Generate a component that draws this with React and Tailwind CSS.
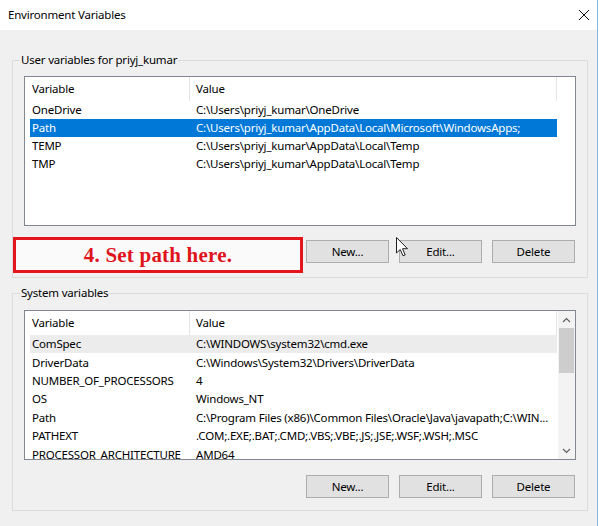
import React from "react";

const userRows = [
  ["OneDrive", "C:\\Users\\priyj_kumar\\OneDrive"],
  ["Path", "C:\\Users\\priyj_kumar\\AppData\\Local\\Microsoft\\WindowsApps;"],
  ["TEMP", "C:\\Users\\priyj_kumar\\AppData\\Local\\Temp"],
  ["TMP", "C:\\Users\\priyj_kumar\\AppData\\Local\\Temp"],
];

const sysRows = [
  ["ComSpec", "C:\\WINDOWS\\system32\\cmd.exe"],
  ["DriverData", "C:\\Windows\\System32\\Drivers\\DriverData"],
  ["NUMBER_OF_PROCESSORS", "4"],
  ["OS", "Windows_NT"],
  ["Path", "C:\\Program Files (x86)\\Common Files\\Oracle\\Java\\javapath;C:\\WIN..."],
  ["PATHEXT", ".COM;.EXE;.BAT;.CMD;.VBS;.VBE;.JS;.JSE;.WSF;.WSH;.MSC"],
  ["PROCESSOR_ARCHITECTURE", "AMD64"],
];

function ListView({ rows, selected, selectedClass, scrollbar, rowClass }) {
  return (
    <div className="relative h-[150px] border border-[#828790] bg-white overflow-hidden">
      <div className="flex h-[24px] items-center pl-[5px]">
        <div className="w-[160px] shrink-0 h-full flex items-center pl-[2px] border-r border-[#e5e5e5]">Variable</div>
        <div className="w-[367px] shrink-0 h-full flex items-center pl-[6px] border-r border-[#e5e5e5]">Value</div>
      </div>
      <div className="pl-[5px]">
        {rows.map((r, i) => (
          <div
            key={i}
            className={
              "flex items-center w-[527px] whitespace-nowrap " +
              rowClass +
              " " +
              (i === selected ? selectedClass : "")
            }
          >
            <div className="w-[160px] shrink-0 pl-[2px]">{r[0]}</div>
            <div className="flex-1 min-w-0 overflow-hidden pl-[6px]">{r[1]}</div>
          </div>
        ))}
      </div>
      {scrollbar && (
        <div className="absolute right-0 top-0 bottom-0 w-[17px] bg-[#f3f3f3] flex flex-col items-center">
          <div className="h-[17px] w-full flex items-center justify-center">
            <svg width="9" height="6" viewBox="0 0 9 6">
              <path d="M1 5 L4.5 1.5 L8 5" fill="none" stroke="#606060" strokeWidth="1.2" />
            </svg>
          </div>
          <div className="w-[15px] h-[45px] bg-[#cdcdcd]" />
          <div className="flex-1" />
          <div className="h-[17px] w-full flex items-center justify-center">
            <svg width="9" height="6" viewBox="0 0 9 6">
              <path d="M1 1 L4.5 4.5 L8 1" fill="none" stroke="#606060" strokeWidth="1.2" />
            </svg>
          </div>
        </div>
      )}
    </div>
  );
}

function Buttons() {
  return (
    <div className="flex justify-end gap-[10px] pr-[1px]">
      {["New...", "Edit...", "Delete"].map((b) => (
        <div
          key={b}
          className="w-[83px] h-[23px] bg-[#e1e1e1] border border-[#adadad] flex items-center justify-center"
        >
          {b}
        </div>
      ))}
    </div>
  );
}

export default function App() {
  return (
    <div className="relative w-[600px] h-[526px] bg-white overflow-hidden font-['Noto_Sans',sans-serif] text-[11.5px] tracking-[-0.2px] text-black leading-[16px]">
      <div className="w-[598px] h-[526px] bg-[#f0f0f0] border-r border-[#8ab8e3] flex flex-col">
        <div className="h-[30px] bg-white flex items-center justify-between pl-[8px] pr-[7px]">
          <span>Environment Variables</span>
          <svg width="12" height="12" viewBox="0 0 12 12">
            <path d="M1 1 L11 11 M11 1 L1 11" stroke="#111" strokeWidth="1" />
          </svg>
        </div>
        <div className="pl-[12px] flex flex-col">
          <fieldset className="mt-[22px] w-[576px] border border-[#dcdcdc] px-[11px] pb-[14px]">
            <legend className="ml-[-4px] px-[1px] leading-[16px]">User variables for priyj_kumar</legend>
            <div className="mt-[8px]">
              <ListView rows={userRows} selected={1} rowClass="h-[18px]" selectedClass="bg-[#0078d7] text-white" />
            </div>
            <div className="mt-[14px]">
              <Buttons />
            </div>
          </fieldset>
          <fieldset className="mt-[7px] w-[576px] border border-[#dcdcdc] px-[11px] pb-[12px]">
            <legend className="ml-[-4px] px-[1px] leading-[16px]">System variables</legend>
            <div className="mt-[9px]">
              <ListView rows={sysRows} selected={0} rowClass="h-[18.4px]" selectedClass="bg-[#ececec]" scrollbar />
            </div>
            <div className="mt-[15px]">
              <Buttons />
            </div>
          </fieldset>
        </div>
      </div>

      <div className="absolute left-[13px] top-[237px] w-[290px] h-[36px] border-[3px] border-[#e3141b] bg-[#fafafa] flex items-center justify-center">
        <span className="font-['Liberation_Serif',serif] font-bold text-[21px] tracking-[0.2px] text-[#e0141c] leading-none">
          4. Set path here.
        </span>
      </div>

      <svg
        className="absolute left-[396px] top-[237px]"
        width="13"
        height="20"
        viewBox="0 0 13 20"
      >
        <path
          d="M0.5 0.5 L0.5 16 L4.2 12.5 L7 18.8 L9.2 17.9 L6.5 11.7 L11.5 11.7 Z"
          fill="#fff"
          stroke="#222"
          strokeWidth="1"
          strokeLinejoin="round"
        />
      </svg>
    </div>
  );
}
